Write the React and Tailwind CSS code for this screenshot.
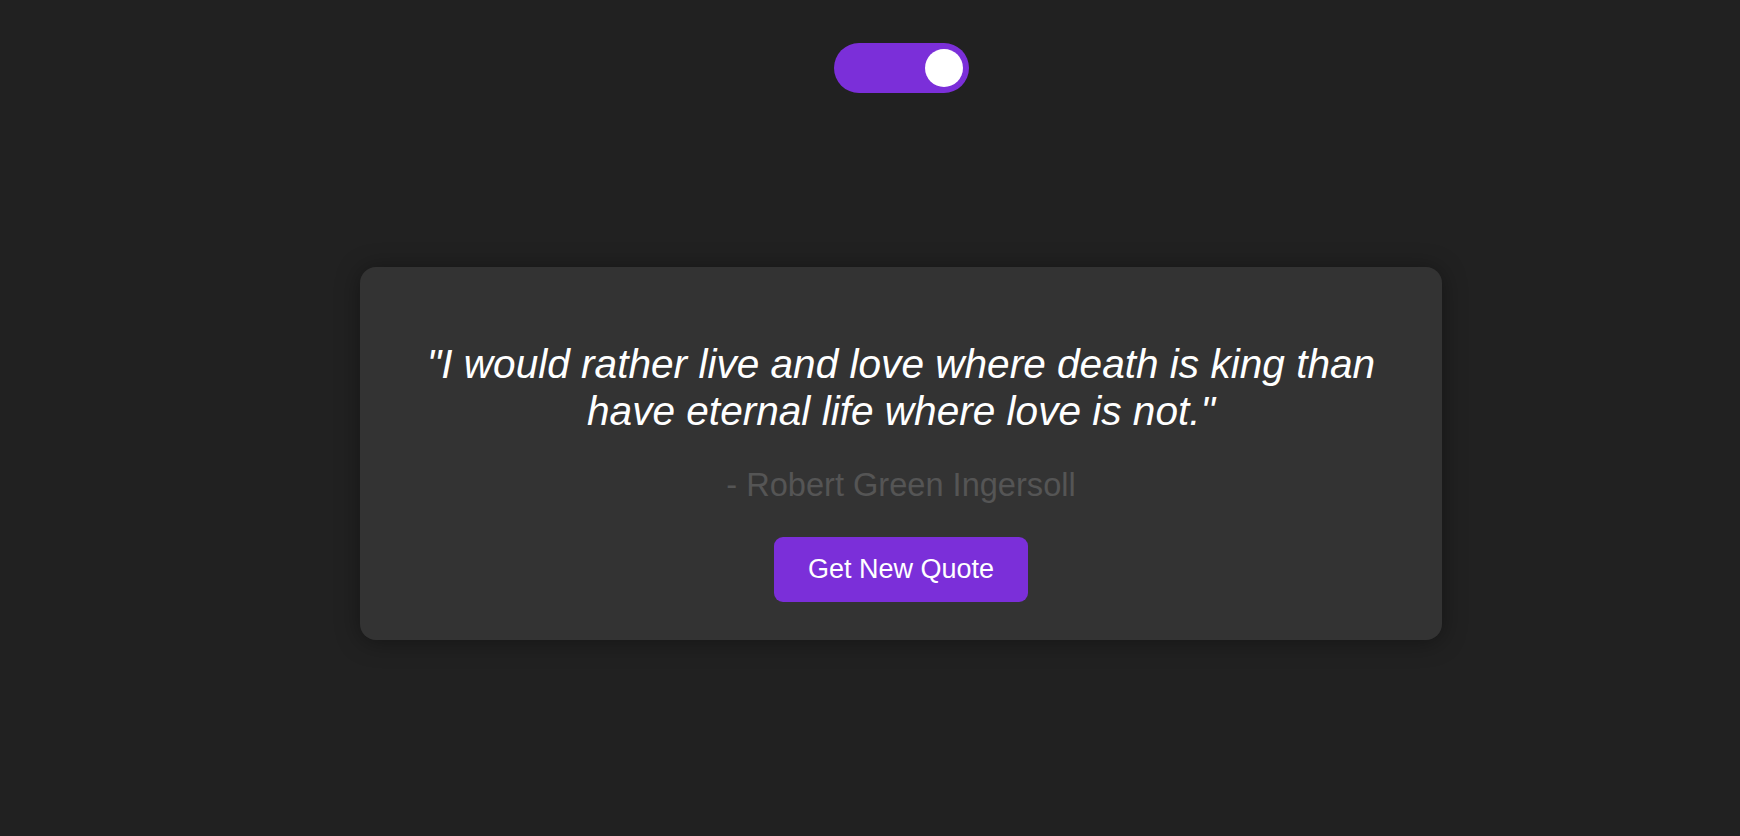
import React, { useState } from 'react';

const QUOTE = {
  text: 'I would rather live and love where death is king than have eternal life where love is not.',
  author: 'Robert Green Ingersoll',
};

export default function App() {
  const [dark, setDark] = useState(true);

  return (
    <div className="min-h-screen w-full bg-[#212121] font-['Liberation_Sans',Arial,sans-serif]">
      <div className="flex flex-col items-center pl-[62px] pt-[43px]">
        {/* Theme toggle */}
        <button
          onClick={() => setDark(!dark)}
          className="flex h-[50px] w-[135px] items-center justify-end rounded-full bg-[#7b2fd9] pr-[6px]"
        >
          <span className="block h-[38px] w-[38px] rounded-full bg-white" />
        </button>

        {/* Quote card */}
        <div className="mt-[174px] flex w-[1082px] flex-col items-center rounded-[16px] bg-[#333333] px-[56px] pt-[74px] pb-[38px] shadow-[0_2px_24px_rgba(0,0,0,0.38)]">
          <p className="text-center text-[40.6px] leading-[47px] italic text-white">
            "{QUOTE.text}"
          </p>
          <p className="mt-[31px] text-[32.6px] leading-[37px] text-[#555555]">- {QUOTE.author}</p>
          <button className="mt-[34px] flex h-[65px] items-center rounded-[9px] bg-[#7b2fd9] px-[34px] text-[27px] text-white">
            Get New Quote
          </button>
        </div>
      </div>
    </div>
  );
}
